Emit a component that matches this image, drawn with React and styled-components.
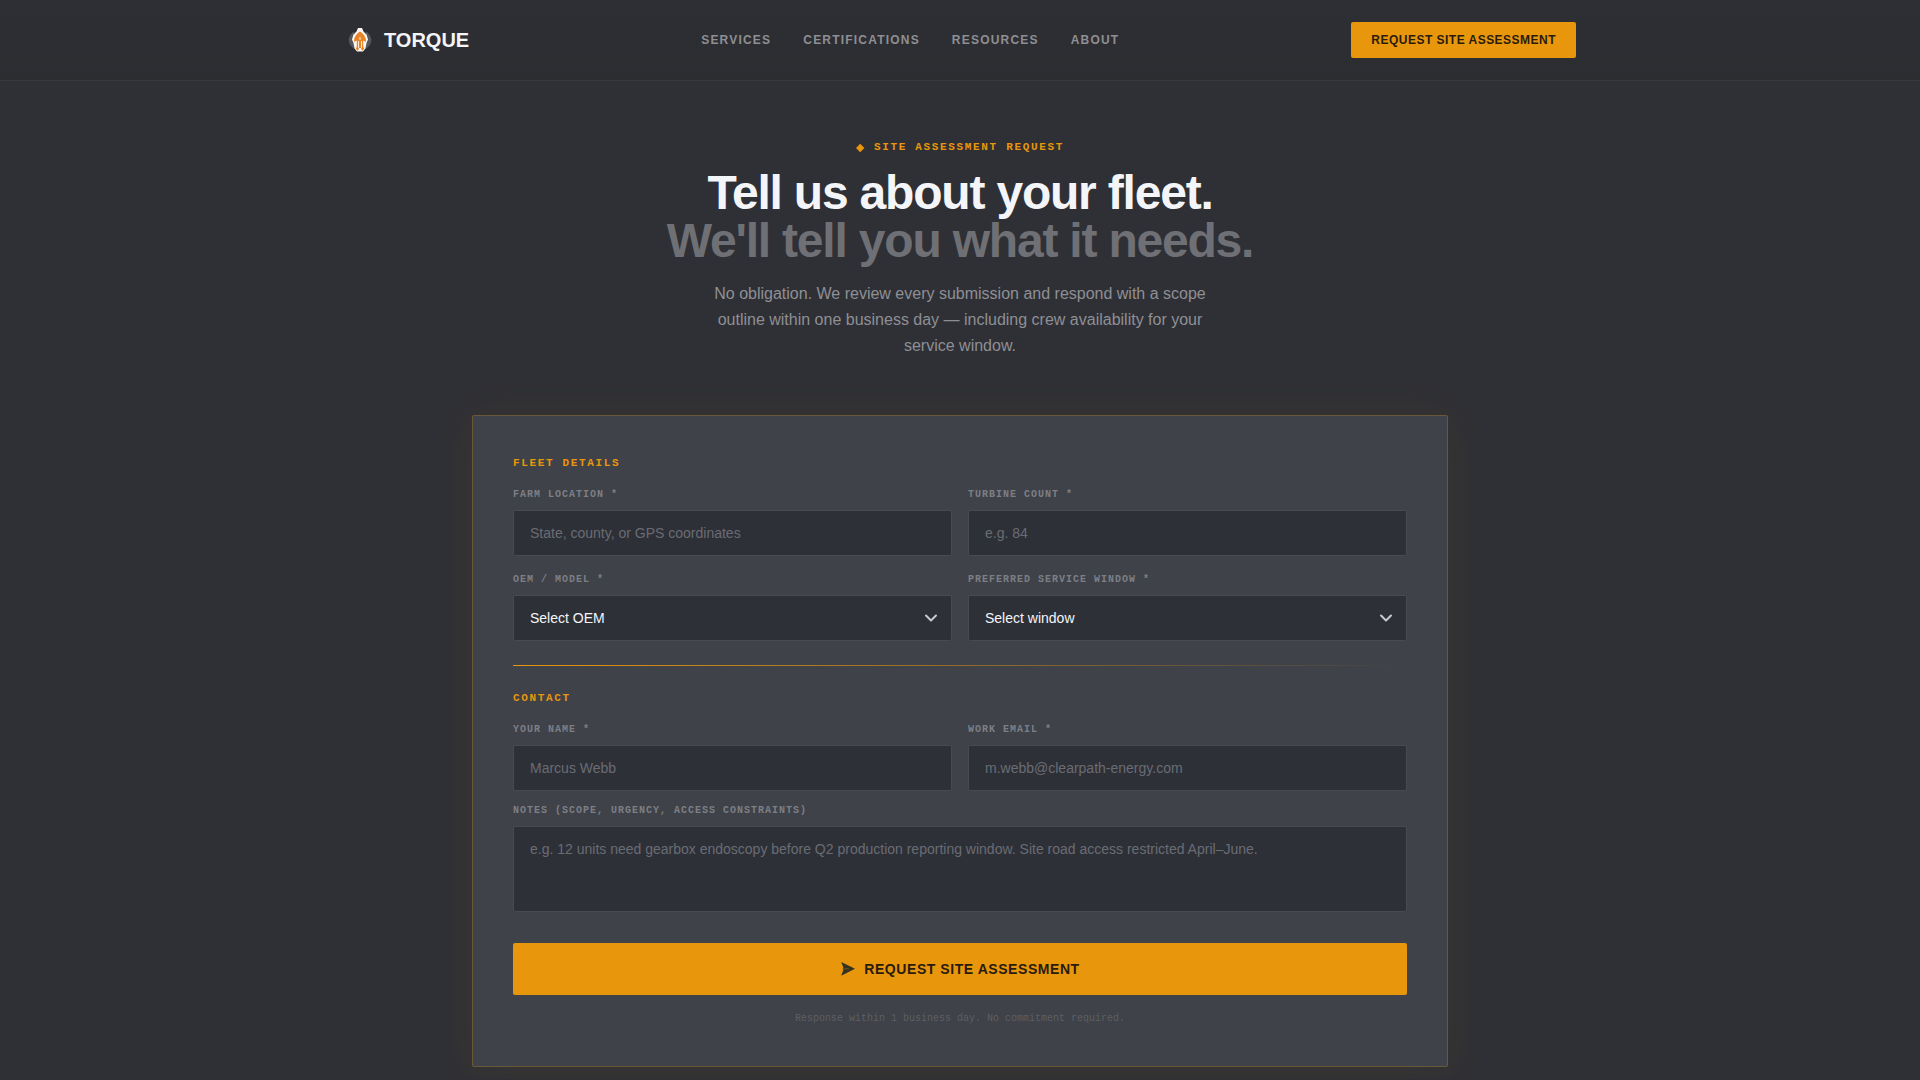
import React from 'react';
import styled, { createGlobalStyle } from 'styled-components';
import { ChevronDown } from 'lucide-react';

const GlobalStyle = createGlobalStyle`
	*, *::before, *::after {
		box-sizing: border-box;
	}

	body {
		margin: 0;
		background: #2f3035;
		color: #f4f5f8;
		font-family: "Liberation Sans", Arial, sans-serif;
		font-size: 16px;
	}
`;

const mono = '"Liberation Mono", "Courier New", monospace';
const amber = '#e8960c';

const Header = styled.header`
	background: linear-gradient(#2e2f34, #2c2d31);
	border-bottom: 1px solid #37383c;
`;

const HeaderInner = styled.div`
	display: flex;
	align-items: center;
	justify-content: space-between;
	max-width: 1280px;
	min-height: 80px;
	margin: 0 auto;
	padding: 0 24px;
`;

const Brand = styled.a`
	display: flex;
	align-items: center;
	gap: 8px;
	color: #f4f5f8;
	font-size: 20px;
	font-weight: 700;
	text-decoration: none;
`;

const Nav = styled.nav`
	display: flex;
	gap: 32px;
`;

const NavLink = styled.a`
	color: #8e8f94;
	font-size: 12px;
	font-weight: 700;
	letter-spacing: 0.1em;
	text-decoration: none;
	text-transform: uppercase;
`;

const Button = styled.button`
	display: flex;
	align-items: center;
	justify-content: center;
	gap: 8px;
	width: ${({ $wide }) => ($wide ? '100%' : 'auto')};
	height: ${({ $wide }) => ($wide ? '52px' : '36px')};
	padding: 0 20px;
	border: 0;
	border-radius: 2px;
	background: ${amber};
	color: #2a1c0c;
	font-family: inherit;
	font-size: ${({ $wide }) => ($wide ? '14px' : '12px')};
	font-weight: 700;
	letter-spacing: 0.04em;
	text-transform: uppercase;
	cursor: pointer;
`;

const Main = styled.main`
	max-width: 1024px;
	margin: 0 auto;
	padding: 57px 24px 12px;
`;

const Hero = styled.section`
	display: flex;
	flex-direction: column;
	align-items: center;
	margin-bottom: 56px;
	text-align: center;
`;

const Eyebrow = styled.p`
	display: flex;
	align-items: center;
	gap: 8px;
	margin: 0 0 12px;
	color: ${amber};
	font-family: ${mono};
	font-size: 11px;
	font-weight: 700;
	letter-spacing: 0.15em;
	line-height: 19px;
	text-transform: uppercase;
`;

const Title = styled.h1`
	margin: 0 0 16px;
	font-size: 48px;
	font-weight: 700;
	letter-spacing: -0.025em;
	line-height: 48px;
`;

const TitleMuted = styled.span`
	display: block;
	color: #6f7075;
`;

const Lead = styled.p`
	max-width: 520px;
	margin: 0;
	color: #8e8f94;
	line-height: 26px;
`;

const Card = styled.form`
	padding: 40px;
	border: 1px solid rgba(232, 150, 12, 0.25);
	border-radius: 2px;
	background: #3f4248;
	box-shadow: 0 4px 48px rgba(232, 150, 12, 0.07);
`;

const SectionTitle = styled.h2`
	margin: 0 0 16px;
	color: ${amber};
	font-family: ${mono};
	font-size: 11px;
	font-weight: 700;
	letter-spacing: 0.15em;
	line-height: 15px;
	text-transform: uppercase;
`;

const FieldGrid = styled.div`
	display: grid;
	grid-template-columns: 1fr 1fr;
	gap: 16px;
`;

const Field = styled.div`
	display: flex;
	flex-direction: column;
	gap: 8px;
	margin-top: ${({ $spaced }) => ($spaced ? '12px' : '0')};
`;

const Label = styled.label`
	color: #7d7f86;
	font-family: ${mono};
	font-size: 10px;
	font-weight: 700;
	letter-spacing: 0.1em;
	line-height: 15px;
	text-transform: uppercase;
`;

const Control = styled.input`
	display: block;
	width: 100%;
	height: 46px;
	padding: 0 16px;
	border: 1px solid #474a51;
	border-radius: 2px;
	background: #2e3038;
	color: #f4f5f8;
	font-family: inherit;
	font-size: 14px;
	outline: none;
	appearance: none;

	&::placeholder {
		color: #6a6c73;
		opacity: 1;
	}

	&:focus {
		border-color: ${amber};
	}
`;

const NotesControl = styled(Control)`
	height: 86px;
	padding: 14px 16px;
	line-height: 16px;
	resize: none;
`;

const SelectWrap = styled.div`
	position: relative;

	svg {
		position: absolute;
		top: 13px;
		right: 11px;
		color: #c9cad0;
		pointer-events: none;
	}
`;

const Divider = styled.hr`
	height: 1px;
	margin: 24px 0 25px;
	border: 0;
	background: linear-gradient(90deg, ${amber}, rgba(232, 150, 12, 0));
`;

const Submit = styled.div`
	margin-top: 31px;
`;

const FinePrint = styled.p`
	margin: 16px 0 0;
	color: #5d5f66;
	font-family: ${mono};
	font-size: 10px;
	line-height: 15px;
	text-align: center;
`;

function Logo() {
	return (
		<svg width='32' height='32' viewBox='0 0 32 32' aria-hidden='true'>
			<path
				d='M9 8 6 11.500 4.600 16l1.400 5 4 4V8zM23 8l3 3.500 1.600 4.500-1.600 5-4 4V8z'
				fill='#55565a'
			/>
			<path
				d='M14 4h4l1.500 3.500 3 3 1.500 5-1.500 3.600-1 5.500-2.500 3h-6l-2.500-3-1-5.500L8 15.500l1.500-5 3-3z'
				fill='#fbf8f4'
			/>
			<path
				d='M16 7.500c2.500 1.500 4.800 4 5.800 7.300l.2 3.200-2.800-1.500v6l1 2.500-2.200 1.800-1-2.800h-2l-1 2.800-2.200-1.800 1-2.500v-6L10 18l.2-3.200c1-3.300 3.300-5.800 5.800-7.300z'
				fill='#e88428'
			/>
			<path d='M16 13v3M14.500 17v7M17.500 17v7' stroke='#ffe9cf' strokeWidth='1' />
		</svg>
	);
}

function Diamond() {
	return (
		<svg width='10' height='12' viewBox='0 0 10 12' aria-hidden='true'>
			<path d='M4.200 1.700 8.400 6l-4.200 4.300L0 6z' fill={amber} />
		</svg>
	);
}

function SendIcon() {
	return (
		<svg width='16' height='16' viewBox='0 0 16 16' aria-hidden='true'>
			<path d='M1.200 1 15 7.800 1.200 14.700 3.200 9.600V6z' fill='#33331f' />
			<path d='M2.500 7.800H9' stroke='#6e571d' strokeWidth='1' />
		</svg>
	);
}

function TextField({ id, label, ...rest }) {
	return (
		<Field>
			<Label htmlFor={id}>{label} *</Label>
			<Control id={id} name={id} {...rest} />
		</Field>
	);
}

function SelectField({ id, label, placeholder, options }) {
	return (
		<Field>
			<Label htmlFor={id}>{label} *</Label>
			<SelectWrap>
				<Control as='select' id={id} name={id} defaultValue=''>
					<option value=''>{placeholder}</option>
					{options.map((option) => (
						<option key={option}>{option}</option>
					))}
				</Control>
				<ChevronDown size={20} strokeWidth={2.4} />
			</SelectWrap>
		</Field>
	);
}

const links = ['Services', 'Certifications', 'Resources', 'About'];
const oems = ['Vestas', 'GE', 'Siemens Gamesa', 'Nordex'];
const windows = ['Spring', 'Summer', 'Fall', 'Winter'];

function App() {
	return (
		<>
			<GlobalStyle />
			<Header>
				<HeaderInner>
					<Brand href='#'>
						<Logo />
						TORQUE
					</Brand>
					<Nav>
						{links.map((link) => (
							<NavLink key={link} href={`#${link.toLowerCase()}`}>
								{link}
							</NavLink>
						))}
					</Nav>
					<Button type='button'>Request Site Assessment</Button>
				</HeaderInner>
			</Header>
			<Main>
				<Hero>
					<Eyebrow>
						<Diamond />
						Site Assessment Request
					</Eyebrow>
					<Title>
						Tell us about your fleet.
						<TitleMuted>We'll tell you what it needs.</TitleMuted>
					</Title>
					<Lead>
						No obligation. We review every submission and respond with a scope outline within one
						business day — including crew availability for your service window.
					</Lead>
				</Hero>
				<Card onSubmit={(e) => e.preventDefault()}>
					<SectionTitle>Fleet Details</SectionTitle>
					<FieldGrid>
						<TextField
							id='location'
							label='Farm Location'
							placeholder='State, county, or GPS coordinates'
						/>
						<TextField id='turbines' label='Turbine Count' placeholder='e.g. 84' />
						<SelectField id='oem' label='OEM / Model' placeholder='Select OEM' options={oems} />
						<SelectField
							id='window'
							label='Preferred Service Window'
							placeholder='Select window'
							options={windows}
						/>
					</FieldGrid>
					<Divider />
					<SectionTitle>Contact</SectionTitle>
					<FieldGrid>
						<TextField id='name' label='Your Name' placeholder='Marcus Webb' />
						<TextField
							id='email'
							type='email'
							label='Work Email'
							placeholder='m.webb@clearpath-energy.com'
						/>
					</FieldGrid>
					<Field $spaced>
						<Label htmlFor='notes'>Notes (scope, urgency, access constraints)</Label>
						<NotesControl
							as='textarea'
							id='notes'
							name='notes'
							placeholder='e.g. 12 units need gearbox endoscopy before Q2 production reporting window. Site road access restricted April–June.'
						/>
					</Field>
					<Submit>
						<Button type='submit' $wide>
							<SendIcon />
							Request Site Assessment
						</Button>
					</Submit>
					<FinePrint>Response within 1 business day. No commitment required.</FinePrint>
				</Card>
			</Main>
		</>
	);
}

export default App;
